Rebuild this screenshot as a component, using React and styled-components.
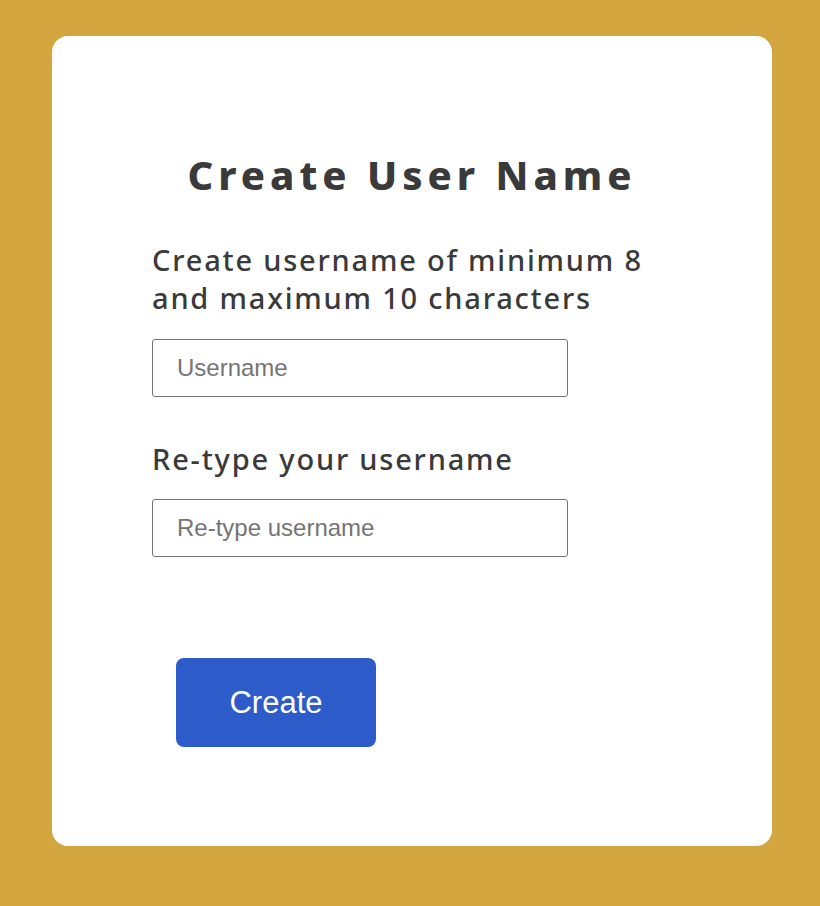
import React from "react";
import styled, { createGlobalStyle } from "styled-components";

const GlobalStyle = createGlobalStyle`
  body {
    margin: 0;
    background: #d4a640;
    font-family: "Noto Sans", "Open Sans", sans-serif;
  }
`;

const Page = styled.div`
  min-height: 100vh;
  padding: 36px 48px 60px 52px;
  box-sizing: border-box;
`;

const Card = styled.div`
  width: 720px;
  height: 810px;
  box-sizing: border-box;
  background: #ffffff;
  border-radius: 16px;
  padding: 115px 100px 0;
  display: flex;
  flex-direction: column;
`;

const Title = styled.h1`
  margin: 0;
  font-size: 40px;
  line-height: 48px;
  font-weight: 800;
  letter-spacing: 5px;
  color: #3a3a3a;
  text-align: center;
`;

const Label = styled.label`
  display: block;
  margin-top: ${(props) => props.gap}px;
  font-size: 29px;
  line-height: 38px;
  font-weight: 500;
  letter-spacing: 1.8px;
  color: #3a3a3a;
`;

const Input = styled.input`
  display: block;
  margin-top: ${(props) => props.gap}px;
  width: 416px;
  height: 58px;
  box-sizing: border-box;
  border: 1px solid #767676;
  border-radius: 3px;
  padding: 0 24px;
  font-family: "Liberation Sans", Arial, sans-serif;
  font-size: 24px;
  color: #3a3a3a;
  outline: none;

  &::placeholder {
    color: #757575;
  }
`;

const Button = styled.button`
  margin: 101px 0 0 24px;
  width: 200px;
  height: 89px;
  border: none;
  border-radius: 8px;
  background: #2d5bc9;
  color: #ffffff;
  font-family: "Liberation Sans", Arial, sans-serif;
  font-size: 31px;
  cursor: pointer;
  align-self: flex-start;
`;

export default function App() {
  return (
    <>
      <GlobalStyle />
      <Page>
        <Card>
          <Title>Create User Name</Title>
          <Label htmlFor="username" gap={42}>
            Create username of minimum 8 <br />
            and maximum 10 characters
          </Label>
          <Input id="username" type="text" placeholder="Username" gap={22} />
          <Label htmlFor="retype" gap={43}>
            Re-type your username
          </Label>
          <Input id="retype" type="text" placeholder="Re-type username" gap={21} />
          <Button>Create</Button>
        </Card>
      </Page>
    </>
  );
}
